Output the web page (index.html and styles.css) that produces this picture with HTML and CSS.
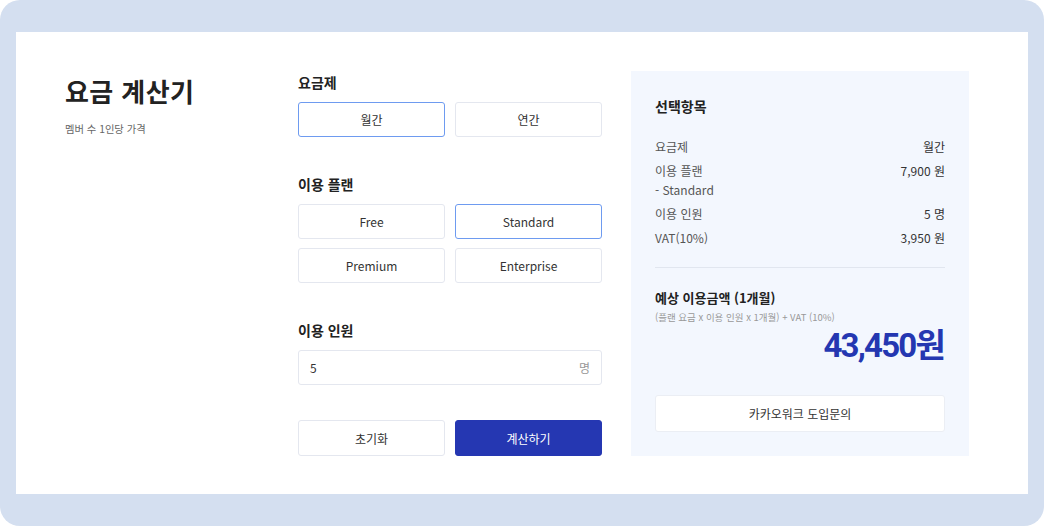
FILE: index.html
```html
<!DOCTYPE html>
<html lang="ko">
<head>
<meta charset="utf-8">
<title>요금 계산기</title>
<link rel="stylesheet" href="styles.css">
</head>
<body>
<div class="frame">
  <div class="card">
    <div class="intro">
      <h1 class="title">요금 계산기</h1>
      <p class="subtitle">멤버 수 1인당 가격</p>
    </div>
    <div class="form">
      <section class="group">
        <h2 class="label">요금제</h2>
        <div class="options">
          <button class="opt selected">월간</button>
          <button class="opt">연간</button>
        </div>
      </section>
      <section class="group">
        <h2 class="label">이용 플랜</h2>
        <div class="options">
          <button class="opt">Free</button>
          <button class="opt selected">Standard</button>
          <button class="opt">Premium</button>
          <button class="opt">Enterprise</button>
        </div>
      </section>
      <section class="group">
        <h2 class="label">이용 인원</h2>
        <div class="input">
          <span class="input-value">5</span>
          <span class="input-unit">명</span>
        </div>
      </section>
      <div class="actions">
        <button class="opt">초기화</button>
        <button class="opt primary">계산하기</button>
      </div>
    </div>
    <aside class="summary">
      <h2 class="sum-title">선택항목</h2>
      <dl class="rows">
        <div class="row"><dt>요금제</dt><dd>월간</dd></div>
        <div class="row"><dt>이용 플랜<br>- Standard</dt><dd>7,900 원</dd></div>
        <div class="row"><dt>이용 인원</dt><dd>5 명</dd></div>
        <div class="row"><dt>VAT(10%)</dt><dd>3,950 원</dd></div>
      </dl>
      <div class="divider"></div>
      <h3 class="total-title">예상 이용금액 (1개월)</h3>
      <p class="formula">(플랜 요금 x 이용 인원 x 1개월) + VAT (10%)</p>
      <p class="amount">43,450원</p>
      <button class="inquiry">카카오워크 도입문의</button>
    </aside>
  </div>
</div>
</body>
</html>
```

FILE: styles.css
```css
* { box-sizing: border-box; }
html, body { margin: 0; padding: 0; background: #ffffff; }
body {
  font-family: "Noto Sans CJK KR", "Noto Sans", sans-serif;
  color: #222222;
}
.frame {
  width: 1044px;
  height: 526px;
  background: #d4dff0;
  border-radius: 20px;
  padding: 32px 16px;
}
.card {
  background: #ffffff;
  height: 462px;
  padding: 39px 0 38px 49px;
  display: flex;
  align-items: stretch;
}
.intro { width: 233px; }
.title {
  margin: 0;
  font-size: 26px;
  line-height: 40px;
  font-weight: 700;
  color: #222222;
  letter-spacing: 0.4px;
}
.subtitle {
  margin: 10px 0 0;
  font-size: 10.3px;
  line-height: 16px;
  color: #666666;
}
.form {
  width: 304px;
  display: flex;
  flex-direction: column;
}
.group + .group { margin-top: 36px; }
.label {
  margin: 0 0 9px;
  font-size: 14px;
  line-height: 22px;
  font-weight: 600;
  color: #222222;
}
.options {
  display: grid;
  grid-template-columns: 1fr 1fr;
  gap: 9px 10px;
}
.opt {
  height: 35px;
  border: 1px solid #e4e7ef;
  border-radius: 3px;
  background: #ffffff;
  font-family: inherit;
  font-size: 12px;
  color: #333333;
  padding: 0;
}
.opt.selected { border-color: #6e9bf0; }
.opt.primary {
  background: #2537b2;
  border-color: #2537b2;
  color: #ffffff;
}
.input {
  height: 35px;
  border: 1px solid #e4e7ef;
  border-radius: 3px;
  display: flex;
  align-items: center;
  justify-content: space-between;
  padding: 0 11px;
  font-size: 12px;
}
.input-value { color: #333333; }
.input-unit { color: #999999; }
.actions {
  margin-top: 35px;
  display: grid;
  grid-template-columns: 1fr 1fr;
  gap: 10px;
}
.actions .opt { height: 36px; }
.summary {
  width: 338px;
  margin-left: 29px;
  background: #f3f7fe;
  padding: 24px 24px 24px 24px;
  display: flex;
  flex-direction: column;
}
.sum-title {
  margin: 0;
  font-size: 14px;
  line-height: 22px;
  font-weight: 700;
  color: #222222;
}
.rows {
  margin: 20px 0 0;
  display: flex;
  flex-direction: column;
  gap: 5px;
}
.row {
  display: flex;
  justify-content: space-between;
  font-size: 12px;
  line-height: 19px;
}
.row dt { color: #555555; }
.row dd { margin: 0; color: #333333; }
.divider {
  margin-top: 20px;
  height: 1px;
  background: #e1e6ef;
}
.total-title {
  margin: 20px 0 0;
  font-size: 13px;
  line-height: 20px;
  font-weight: 700;
  color: #222222;
}
.formula {
  margin: 2px 0 0;
  font-size: 9.5px;
  line-height: 14px;
  color: #999999;
}
.amount {
  margin: 2px 0 0;
  text-align: right;
  font-family: Roboto, "Noto Sans CJK KR", sans-serif;
  font-size: 33px;
  line-height: 40px;
  font-weight: 700;
  color: #2437b1;
  letter-spacing: -1.8px;
  padding-right: 1px;
}
.inquiry {
  margin-top: auto;
  height: 37px;
  border: 1px solid #ebeef4;
  border-radius: 3px;
  background: #ffffff;
  font-family: inherit;
  font-size: 12px;
  color: #333333;
  padding: 0;
}
```
